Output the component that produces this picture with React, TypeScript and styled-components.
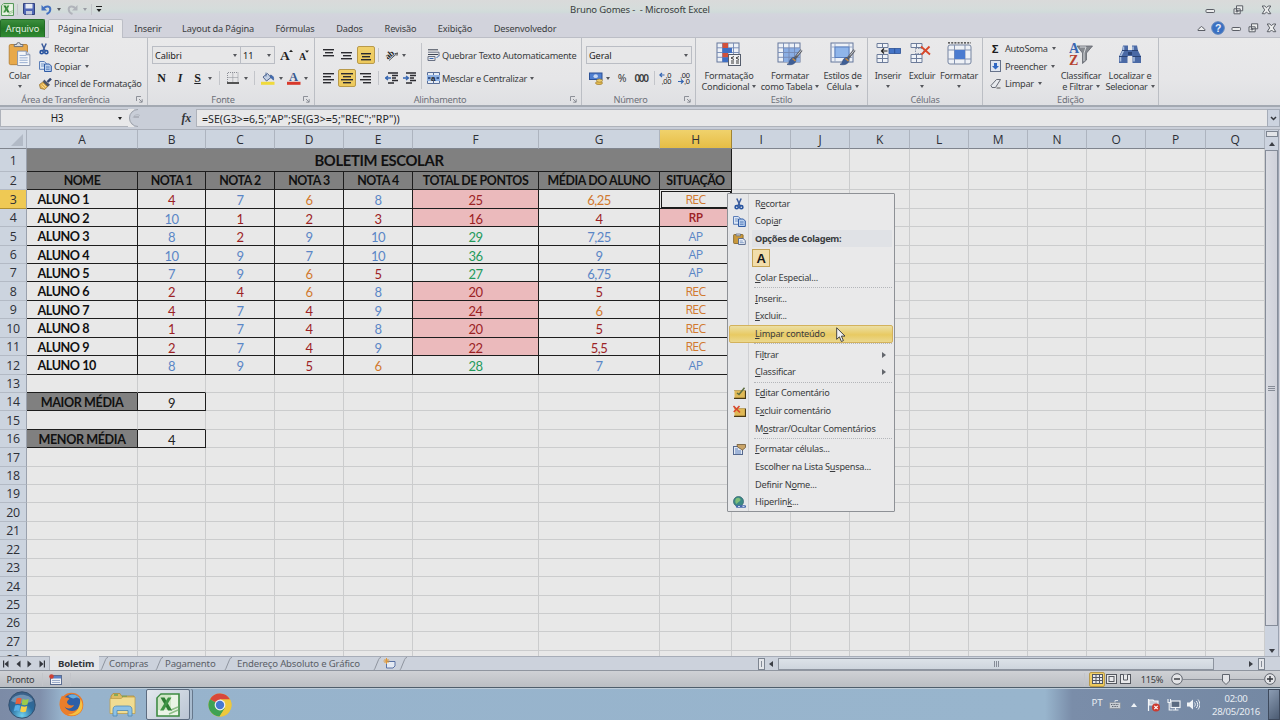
import React from "react";
import styled, { createGlobalStyle, css } from "styled-components";

const ui = `"Noto Sans", "Open Sans", sans-serif`;
const cellFont = `Lato, "Open Sans", sans-serif`;

const Global = createGlobalStyle`
  * { box-sizing: border-box; }
  html, body { margin: 0; padding: 0; overflow: hidden; }
  body { font-family: ${ui}; font-size: 9.2px; letter-spacing: -0.25px; color: #3a3c40; }
  svg { display: block; flex: none; }
`;

const Screen = styled.div`
  position: relative;
  width: 1280px;
  height: 720px;
  display: flex;
  flex-direction: column;
  overflow: hidden;
  background: #d2d3dc;
`;

/* ---------- title bar ---------- */
const TitleBar = styled.header`
  display: grid;
  grid-template-columns: 400px 480px 400px;
  align-items: center;
  height: 19px;
  background: linear-gradient(#dadada 0, #d6dcdb 8px, #d0dbda 12px, #d3d5dd 14px, #d2d3dc 100%);
`;
const QuickAccess = styled.div`
  display: flex;
  align-items: center;
  height: 19px;
  padding: 0 0 1px 1px;
`;
const Title = styled.div`
  text-align: center;
  font-size: 9.5px;
  line-height: 18px;
  letter-spacing: -0.15px;
  white-space: pre;
`;
const WindowButtons = styled.div<{ $w: number }>`
  display: grid;
  grid-auto-flow: column;
  grid-auto-columns: ${(p) => p.$w}px;
  justify-content: end;
  justify-items: center;
  align-items: center;
`;
const Slot = styled.span<{ $w: number }>`
  display: flex;
  flex: none;
  justify-content: center;
  align-items: center;
  width: ${(p) => p.$w}px;
`;
const Caret = styled.i<{ $c?: string }>`
  display: inline-block;
  flex: none;
  width: 0;
  height: 0;
  border: 2.5px solid transparent;
  border-top: 3px solid ${(p) => p.$c || "#55575c"};
  border-bottom: 0;
`;

/* ---------- ribbon tabs ---------- */
const TabRow = styled.nav`
  display: flex;
  height: 19px;
  border-bottom: 1px solid #bcbec6;
  background: #d2d3dc;
`;
const FileTab = styled.div`
  width: 45px;
  height: 18px;
  border-radius: 2px 2px 0 0;
  background: linear-gradient(#3c8e3d, #237626 50%, #308a32);
  border: 1px solid #236a26;
  border-bottom: 0;
  color: #e4f1e2;
  text-align: center;
  line-height: 18px;
  letter-spacing: 0;
`;
const RibbonTab = styled.div<{ $w: number; $active?: boolean }>`
  width: ${(p) => p.$w}px;
  height: 19px;
  line-height: 19px;
  text-align: center;
  letter-spacing: -0.15px;
  white-space: nowrap;
  ${(p) =>
    p.$active &&
    css`
      margin-left: 3px;
      border: 1px solid #bcbec6;
      border-bottom: 0;
      border-radius: 2px 2px 0 0;
      background: #e9e9eb;
      line-height: 18px;
    `}
`;
const TabTools = styled.div`
  margin-left: auto;
  display: flex;
  align-items: center;
`;

/* ---------- ribbon ---------- */
const Ribbon = styled.section`
  display: flex;
  height: 69px;
  background: linear-gradient(#e9e9ea, #e6e6e8 60%, #dfe0e3);
  border-bottom: 2px solid #a3a9b2;
`;
const Group = styled.div<{ $w: number }>`
  flex: none;
  position: relative;
  width: ${(p) => p.$w}px;
  height: 67px;
  display: flex;
  flex-direction: column;
  border-right: 1px solid #bbbec4;
`;
const GroupBody = styled.div`
  display: flex;
  height: 56px;
`;
const GroupLabel = styled.div<{ $r?: number }>`
  height: 11px;
  line-height: 11px;
  padding-right: ${(p) => p.$r || 0}px;
  text-align: center;
  color: #6d7079;
`;
const LauncherBox = styled.span`
  position: absolute;
  right: 4px;
  bottom: 2px;
`;
const Stack = styled.div<{ $w?: number; $pl?: number }>`
  display: flex;
  flex-direction: column;
  width: ${(p) => (p.$w ? p.$w + "px" : "auto")};
  padding-left: ${(p) => p.$pl || 0}px;
`;
const SmallStack = styled(Stack)`
  padding-top: 2px;
`;
const SmallButton = styled.div<{ $icon: number }>`
  display: grid;
  grid-template-columns: ${(p) => p.$icon}px auto auto;
  justify-content: start;
  align-items: center;
  height: 17.6px;
  white-space: nowrap;
  & > ${Caret} { margin-left: 4px; }
`;
const Sigma = styled.b`
  font-size: 11px;
  line-height: 12px;
  padding-left: 2px;
  color: #1c1c20;
`;
const BigButton = styled.div<{ $w: number }>`
  flex: none;
  width: ${(p) => p.$w}px;
  display: flex;
  flex-direction: column;
  align-items: center;
  padding-top: 4px;
  text-align: center;
  line-height: 10.6px;
  white-space: nowrap;
  & > svg { margin-bottom: 5px; }
  & ${Caret} { margin: 0 0 2px 3px; }
`;
const CaretLine = styled.span`
  height: 11px;
  display: flex;
  align-items: center;
  margin-left: -3px;
`;
const ToolRow = styled.div<{ $h: number }>`
  display: flex;
  align-items: center;
  height: ${(p) => p.$h}px;
  white-space: nowrap;
`;
const Combo = styled.div<{ $w: number }>`
  display: flex;
  justify-content: space-between;
  align-items: center;
  width: ${(p) => p.$w}px;
  height: 18px;
  padding: 0 3px 0 2px;
  border: 1px solid #babdc4;
  background: #e7e7e8;
  color: #222;
  letter-spacing: -0.1px;
  & + & { border-left: 0; }
`;
const Divider = styled.i<{ $h?: number }>`
  width: 1px;
  height: ${(p) => p.$h || 14}px;
  background: #c3c5ca;
`;
const Pressed = styled.span`
  display: flex;
  align-items: center;
  justify-content: center;
  width: 18px;
  height: 18px;
  border: 1px solid #b99a4a;
  border-radius: 2px;
  background: linear-gradient(#f0d06a, #edc95c);
`;
const ViewPressed = styled(Pressed)`
  width: 16px;
  height: 15px;
`;
const Glyph = styled.b<{ $italic?: boolean; $u?: boolean }>`
  font-family: "Liberation Serif", serif;
  font-size: 12px;
  font-style: ${(p) => (p.$italic ? "italic" : "normal")};
  text-decoration: ${(p) => (p.$u ? "underline" : "none")};
  line-height: 12px;
  color: #1c1c20;
`;
const Percent = styled.span`
  font-size: 10.5px;
  line-height: 12px;
`;
const Thousands = styled.span`
  font-size: 10px;
  line-height: 12px;
  font-weight: 600;
  letter-spacing: -1.4px;
`;

/* ---------- formula bar ---------- */
const FormulaBar = styled.section`
  display: flex;
  height: 23px;
  padding: 2px 0;
  background: #c9ced8;
  border-bottom: 1px solid #a9aeb8;
`;
const NameBox = styled.div`
  display: grid;
  grid-template-columns: 112px 14px;
  align-items: center;
  justify-items: center;
  width: 128px;
  height: 18px;
  background: #e8e8e9;
  border: 1px solid #aeb2ba;
  border-right: 0;
  color: #222;
  font-size: 10px;
`;
const FxArea = styled.div`
  display: flex;
  align-items: center;
  justify-content: space-between;
  width: 68px;
  height: 18px;
  padding: 0 5px 0 1px;
  background: linear-gradient(90deg, #e8e8e9 6px, transparent 6px);
  & > svg { margin-top: -1px; }
`;
const FxLabel = styled.span`
  font: italic bold 12px "Liberation Serif", serif;
  color: #33353a;
`;
const FormulaInput = styled.div`
  flex: 1;
  height: 18px;
  line-height: 18px;
  padding-left: 5px;
  border: 1px solid #aeb2ba;
  border-right: 0;
  background: #e8e8e9;
  color: #26272a;
  font-size: 10.6px;
  letter-spacing: 0.02px;
`;
const ExpandButton = styled.div`
  display: flex;
  align-items: center;
  justify-content: center;
  width: 13px;
  height: 18px;
  border: 1px solid #a5acb8;
  background: #ccd3df;
`;

/* ---------- sheet ---------- */
const COLS = [111, 68, 69, 69, 69, 126, 121, 72, 59, 59, 60, 59, 59, 59, 59, 60, 59];
const LETTERS = "ABCDEFGHIJKLMNOPQ".split("");
const columns = `27px ${COLS.map((c) => c + "px").join(" ")}`;
const rowBottom = (n: number) => (n === 1 ? 172 : Math.round(190.3 + (n - 2) * 18.42));
const rowHeights = Array.from({ length: 28 }, (_, i) =>
  i === 0 ? 23 : rowBottom(i + 1) - rowBottom(i)
);

const Work = styled.main`
  display: flex;
  height: 527px;
  overflow: hidden;
`;
const Sheet = styled.div`
  flex: none;
  width: 1265px;
  height: 527px;
  overflow: hidden;
  display: grid;
  grid-template-columns: ${columns};
  grid-template-rows: 19px ${rowHeights.map((h) => h + "px").join(" ")};
  background: #e8e8e8;
`;
const Corner = styled.div`
  display: flex;
  align-items: flex-end;
  justify-content: flex-end;
  padding: 0 3px 2px 0;
  background: #cdd5e0;
  border-right: 1px solid #a9b0bc;
  border-bottom: 1px solid #80858e;
`;
const ColHead = styled.div<{ $sel?: boolean }>`
  background: ${(p) => (p.$sel ? "linear-gradient(#f0d26c, #e6bd45)" : "#ccd4df")};
  border-right: 1px solid ${(p) => (p.$sel ? "#a08434" : "#adb4bf")};
  border-bottom: 1px solid #80858e;
  text-align: center;
  line-height: 20px;
  font-family: "Open Sans", sans-serif;
  font-size: 12px;
  letter-spacing: -0.2px;
  color: #2c2f36;
`;
const RowHead = styled.div<{ $sel?: boolean }>`
  display: flex;
  align-items: center;
  justify-content: center;
  padding-top: 1px;
  background: ${(p) => (p.$sel ? "#efc954" : "#ccd4df")};
  border-right: 1px solid #9aa1ad;
  border-bottom: 1px solid ${(p) => (p.$sel ? "#b08f30" : "#b3bac5")};
  font-family: "Open Sans", sans-serif;
  font-size: 12.4px;
  letter-spacing: -0.4px;
  line-height: 14px;
  color: #2c2f36;
`;
type CellProps = {
  $fill?: string;
  $ink?: string;
  $bold?: boolean;
  $line?: string;
  $edge?: string;
  $left?: boolean;
  $span?: number;
  $size?: number;
  $ls?: number;
  $pt?: number;
};
const Cell = styled.div<CellProps>`
  display: flex;
  align-items: center;
  justify-content: ${(p) => (p.$left ? "flex-start" : "center")};
  padding-top: ${(p) => p.$pt ?? 2}px;
  padding-left: ${(p) => (p.$left ? 10.5 : 0)}px;
  grid-column: span ${(p) => p.$span || 1};
  background: ${(p) => p.$fill || "transparent"};
  color: ${(p) => p.$ink || "#111"};
  font-family: ${cellFont};
  font-size: ${(p) => p.$size || 13}px;
  font-weight: ${(p) => (p.$bold ? 700 : 400)};
  letter-spacing: ${(p) => p.$ls ?? -0.5}px;
  line-height: 14px;
  white-space: nowrap;
  border-right: 1px solid ${(p) => p.$edge || p.$line || "#cbcccd"};
  border-bottom: 1px solid ${(p) => p.$line || "#cbcccd"};
`;
const ResultCell = styled(Cell)`
  font-family: "Open Sans", sans-serif;
  font-size: 12.3px;
  font-weight: ${(p) => (p.$bold ? 600 : 400)};
  letter-spacing: -0.7px;
  padding-top: 1px;
`;
const ActiveCell = styled(ResultCell)`
  outline: 1px solid #1b1b1b;
  outline-offset: -2px;
`;

/* ---------- scroll bars ---------- */
const Arrow = styled.i<{ $dir: "up" | "down" | "left" | "right"; $c?: string }>`
  width: 0;
  height: 0;
  border: 3.5px solid transparent;
  ${(p) => p.$dir === "up" && `border-bottom: 4px solid ${p.$c || "#3b3e45"}; border-top: 0;`}
  ${(p) => p.$dir === "down" && "border-top: 4px solid #3b3e45; border-bottom: 0;"}
  ${(p) => p.$dir === "left" && "border-right: 4px solid #3b3e45; border-left: 0;"}
  ${(p) => p.$dir === "right" && "border-left: 4px solid #3b3e45; border-right: 0;"}
`;
const VScroll = styled.div`
  display: flex;
  flex-direction: column;
  align-items: center;
  width: 13px;
  padding-top: 1px;
  background: #ccd3df;
  box-shadow: 1px 0 0 #9ba3b1;
`;
const VSplit = styled.div`
  width: 12px;
  height: 6px;
  margin-bottom: 5px;
  border: 1px solid #7d8591;
  background: #e2e4e8;
`;
const VThumb = styled.div`
  display: flex;
  flex-direction: column;
  justify-content: center;
  align-items: center;
  gap: 1px;
  width: 13px;
  height: 476px;
  margin: 4px 0 23px;
  border: 1px solid #858c99;
  background: linear-gradient(90deg, #d9dbe2, #cfd1da);
`;
const Grip = styled.i<{ $v?: boolean }>`
  width: ${(p) => (p.$v ? 1 : 7)}px;
  height: ${(p) => (p.$v ? 6 : 1)}px;
  background: #868c97;
`;

const SheetTabs = styled.div`
  display: flex;
  align-items: center;
  height: 15px;
  border-top: 1px solid #a7adb8;
  border-bottom: 1px solid #8f959f;
  background: #ccd2dc;
  font-size: 9.6px;
`;
const NavArrows = styled.div`
  display: flex;
  width: 50px;
  height: 13px;
  border-right: 1px solid #a7adb8;
  align-items: center;
`;
const SheetTab = styled.div<{ $w: number; $active?: boolean; $pl?: number }>`
  width: ${(p) => p.$w}px;
  height: 14px;
  margin-top: ${(p) => (p.$active ? -1 : 0)}px;
  line-height: ${(p) => (p.$active ? 16 : 14)}px;
  padding-left: ${(p) => p.$pl || 1}px;
  background: ${(p) => (p.$active ? "#e6e7ea" : "transparent")};
  font-weight: ${(p) => (p.$active ? 700 : 400)};
  letter-spacing: -0.17px;
  color: ${(p) => (p.$active ? "#33363c" : "#5b5f67")};
  white-space: nowrap;
`;
const HScroll = styled.div`
  display: flex;
  align-items: center;
  width: 522px;
  margin-left: auto;
`;
const HSplit = styled.div`
  display: flex;
  justify-content: center;
  align-items: center;
  width: 7px;
  height: 12px;
  border: 1px solid #7d8591;
  background: #e4e6ea;
`;
const HThumb = styled.div`
  display: flex;
  align-items: center;
  justify-content: center;
  gap: 1px;
  width: 436px;
  height: 12px;
  margin: 0 35px 0 1px;
  border: 1px solid #8d949f;
  background: linear-gradient(#dce2e8, #ced5dd);
`;

/* ---------- status bar ---------- */
const StatusBar = styled.footer`
  display: flex;
  align-items: center;
  height: 17px;
  padding: 0 4px 0 6px;
  background: linear-gradient(#cfd1d5, #bbbec3);
  border-bottom: 1px solid #4f5e6b;
`;
const ZoomTrack = styled.div`
  display: flex;
  align-items: center;
  width: 81px;
  height: 11px;
  padding-left: 39px;
  background: linear-gradient(#8a8e96, #8a8e96) 0 5px / 100% 1px no-repeat;
`;
const Right = styled.div`
  display: flex;
  align-items: center;
  margin-left: auto;
`;

/* ---------- task bar ---------- */
const TaskBar = styled.footer`
  display: flex;
  height: 32px;
  background: linear-gradient(
    90deg,
    #7c8ba6 0,
    #7f8fab 40px,
    #97b3cc 62px,
    #98b5cd 1045px,
    #7a8da9 1072px,
    #7488a3 100%
  );
  border-top: 1px solid #bccbd8;
`;
const TaskSlot = styled.div<{ $w: number; $active?: boolean }>`
  display: flex;
  align-items: center;
  justify-content: center;
  width: ${(p) => p.$w}px;
  height: 31px;
  ${(p) =>
    p.$active &&
    css`
      border: 1px solid #5d6c80;
      border-radius: 2px;
      background: linear-gradient(135deg, #e3e8ee, #bac5d4);
      box-shadow: 2px 0 0 #a9bccf, 3px 0 0 #66788c;
      margin-right: 4px;
    `}
`;
const Tray = styled.div`
  display: flex;
  align-items: center;
  margin-left: auto;
  color: #e8edf3;
`;
const Lang = styled.span`
  width: 12px;
  margin-bottom: 5px;
  text-align: center;
  font-size: 9.8px;
`;
const Clock = styled.div`
  width: 64px;
  text-align: center;
  font-size: 9.5px;
  line-height: 13px;
  letter-spacing: -0.25px;
`;
const ShowDesktop = styled.div`
  width: 12px;
  height: 31px;
  border: 1px solid #3e4a5d;
  background: linear-gradient(135deg, #8b9cb3, #4c5c73);
`;

/* ---------- context menu ---------- */
const Menu = styled.div`
  position: absolute;
  left: 727px;
  top: 193px;
  width: 168px;
  height: 319px;
  padding: 1px;
  border: 1px solid #8e9196;
  border-radius: 1px;
  background: linear-gradient(90deg, #e6e7e9 0 20px, #cfd0d3 20px 21px, #e9e9ea 21px);
`;
const MenuItem = styled.div<{ $hot?: boolean; $head?: boolean }>`
  display: grid;
  grid-template-columns: 18px auto 1fr;
  column-gap: 7px;
  align-items: center;
  height: ${(p) => (p.$head ? 17 : 17.6)}px;
  line-height: 12px;
  white-space: nowrap;
  border: 1px solid transparent;
  border-radius: 2px;
  & > svg:first-child { justify-self: center; }
  & > ${Arrow} { justify-self: end; margin-right: 6px; border-width: 3px; border-left-width: 4px; border-left-color: #63666c; }
  ${(p) => p.$hot && "border-color: #d3b25c; background: linear-gradient(#ecdfa4, #e8ca62 55%, #ebd88e);"}
  ${(p) => p.$head && "font-weight: 700; letter-spacing: -0.35px; background: linear-gradient(90deg, transparent 22px, #e0e2e6 22px);"}
`;
const MenuRule = styled.hr`
  height: 0;
  margin: 0.8px 1px 1.6px 25px;
  border: 0;
  border-top: 1px dotted #b4b6ba;
`;
const PasteOption = styled.div`
  display: flex;
  justify-content: center;
  align-items: center;
  width: 18px;
  height: 18px;
  margin: 2px 0 1.600px 23px;
  border: 1px solid #c4a356;
  background: #f2ddaa;
  font: bold 13px "Liberation Sans", sans-serif;
  color: #15151a;
`;
const Pointer = styled.svg`
  position: absolute;
  left: 836px;
  top: 327px;
`;

/* ---------- drawings ---------- */
const Lines = ({ rows, w = 12, h = 12 }: { rows: [number, number, number][]; w?: number; h?: number }) => (
  <svg width={w} height={h}>
    {rows.map(([x, y, len], i) => (
      <rect key={i} x={x} y={y} width={len} height="1.4" fill="#2b2b30" />
    ))}
  </svg>
);
const Scissors = () => (
  <svg width="10" height="12" viewBox="0 0 10 12">
    <path d="M2.800.5 6.200 8M7.200.5 3.800 8" stroke="#3c5c9c" strokeWidth="1.500" fill="none" />
    <circle cx="2.700" cy="9.200" r="1.600" fill="none" stroke="#2854a0" strokeWidth="1.600" />
    <circle cx="7.300" cy="9.200" r="1.600" fill="none" stroke="#2854a0" strokeWidth="1.600" />
  </svg>
);
const Copy = () => (
  <svg width="13" height="11" viewBox="0 0 13 11">
    <path d="M.5.5h4.800l2 2v5.800H.5z" fill="#dbe6f5" stroke="#5c7fb8" />
    <path d="M2 3h3M2 5h3" stroke="#7595c6" />
    <path d="M5.500 3h4.800l2 2v5.500H5.500z" fill="#b9cfee" stroke="#2f5ba4" />
    <path d="M7 6h3.600M7 8.200h3.600" stroke="#4f78b8" />
  </svg>
);
const Brush = () => (
  <svg width="13" height="12" viewBox="0 0 13 12">
    <path d="M12 .6 8.500 4" stroke="#33456e" strokeWidth="2.400" />
    <path d="M5.200 1.600 11 6.800 8.500 9 3.600 4.200z" fill="#4d5568" />
    <path d="M3.800 4 .4 6.600 1.400 10.400l4.400 1L8.600 8.600z" fill="#e6b552" stroke="#8f6b2a" strokeWidth=".7" />
    <path d="M2.500 7.500l3 3M4 6l3 3" stroke="#fae3a8" strokeWidth=".8" />
  </svg>
);
const Clipboard = ({ s = 1 }: { s?: number }) => (
  <svg width={23 * s} height={24 * s} viewBox="0 0 23 25">
    <rect x=".8" y="2.600" width="19" height="21" rx="1.500" fill="#e8a94a" stroke="#b98439" />
    <path d="M6 4.800V2.600h2.500a2 2 0 0 1 4 0H15v2.200z" fill="#d7dbe0" stroke="#666d78" />
    <path d="M9.500 9.500h9l3.800 3.800v11.200H9.500z" fill="#f4f6f9" stroke="#8592ab" />
    <path d="M11.500 14h7M11.500 16.500h8.500M11.500 19h8.500M11.500 21.500h8.500" stroke="#8ba4cb" strokeWidth=".9" />
    <path d="M18.500 9.500v3.800h3.800" fill="#c9d3e4" stroke="#8592ab" />
  </svg>
);
const PasteSmall = () => (
  <svg width="13" height="12" viewBox="0 0 13 12">
    <rect x=".6" y="1.500" width="9.500" height="9" rx=".8" fill="#c9993c" stroke="#7d5e22" strokeWidth=".8" />
    <path d="M3 2.800V1h4.500v1.800z" fill="#d9dce0" stroke="#5f6674" strokeWidth=".7" />
    <path d="M5.500 5.500h4.500l2.300 2v4H5.500z" fill="#e8edf5" stroke="#56688c" strokeWidth=".9" />
    <path d="M6.800 8h3M6.800 9.700h4" stroke="#6d8bbd" strokeWidth=".8" />
  </svg>
);
const Launcher = () => (
  <LauncherBox>
    <svg width="7" height="7" viewBox="0 0 7 7" fill="none" stroke="#83878f" strokeWidth=".9">
      <path d="M.5 5V.5H5M3 3l3 3M6.200 3.200v3H3.200" />
    </svg>
  </LauncherBox>
);
const FontStep = ({ grow }: { grow?: boolean }) => (
  <svg width={grow ? 13 : 10} height="14" viewBox={grow ? "0 0 13 14" : "0 0 10 14"}>
    <text x="0" y={grow ? 12 : 12} fontFamily="Liberation Serif" fontWeight="700" fontSize={grow ? 13.5 : 10} fill="#222">A</text>
    {grow ? <path d="M9 4l2-2.200L13 4z" fill="#222" /> : <path d="M6 2.500h4L8 4.700z" fill="#222" />}
  </svg>
);
const GridIcon = ({ kind }: { kind: "cond" | "table" | "style" }) => (
  <svg width="26" height="24" viewBox="0 0 26 24">
    <rect x="1" y="1" width="22" height="19" fill="#edf1f7" stroke="#65779b" />
    {kind === "table" && <rect x="6" y="6" width="17" height="14" fill="#8aaee4" />}
    {kind !== "style" && (
      <path d="M6.500 1v19M12 1v19M17.500 1v19M1 5.800h22M1 10.500h22M1 15.300h22" stroke="#7489b3" strokeWidth=".9" fill="none" />
    )}
    {kind === "cond" && (
      <g>
        <rect x="6.500" y="1" width="5.500" height="5" fill="#d2513c" />
        <rect x="6.500" y="6" width="9.500" height="5" fill="#3f6fc4" />
        <rect x="6.500" y="11" width="5.500" height="4.500" fill="#d2513c" />
        <rect x="6.500" y="15.300" width="5.500" height="4.700" fill="#3f6fc4" />
        <rect x="12.500" y="12.500" width="12" height="11" fill="#f1f2f4" stroke="#555d6c" />
        <path d="M18 14.500l-3 1.500 3 1.500M15 19h3M15 21h3M23 14.500l-3 1.500 3 1.500M20 19h3M20 21h3" stroke="#222" strokeWidth=".9" fill="none" />
      </g>
    )}
    {kind === "style" && (
      <g>
        <path d="M5 1v19M19 1v19M1 5h22M1 15.500h22" stroke="#9cabc8" fill="none" />
        <rect x="5" y="5" width="14" height="10.500" fill="#8fb5ea" stroke="#5b80c0" />
      </g>
    )}
    {kind !== "cond" && (
      <g>
        <path d="M24.500 8 17 17.500" stroke="#5d5f66" strokeWidth="2.800" />
        <path d="M24.500 8 20 13.500" stroke="#c9cdd4" strokeWidth="1" />
        <path d="M17 15.500c-3 0-4 2-5 5-.6 1-1.500 1.500-2 2 5 .9 9-.5 9-5z" fill="#3f5f96" stroke="#2d4675" strokeWidth=".5" />
        <path d="M15.500 16.500l3 2.400" stroke="#c98a3d" strokeWidth="1.600" />
      </g>
    )}
  </svg>
);
const CellsIcon = ({ kind }: { kind: "in" | "out" | "fmt" }) => (
  <svg width="25" height="24" viewBox="0 0 25 24">
    {kind !== "fmt" ? (
      <g>
        <path d="M1 1.500h11v4H1zM6.500 1.500v4M1 12.500h11v8H1zM6.500 12.500v8M1 16.500h11" fill="#eff2f7" stroke="#6d7c9a" />
        {kind === "in" ? (
          <g>
            <rect x="13" y="6.500" width="11.500" height="5" fill="#4474c6" stroke="#2c5196" strokeWidth=".8" />
            <path d="M18.700 6.500v5" stroke="#2c5196" />
            <path d="M5.500 9h6M8 6.500 5.500 9 8 11.500" stroke="#222" strokeWidth="1.200" fill="none" />
          </g>
        ) : (
          <g>
            <rect x="5.500" y="6.500" width="8" height="5" fill="none" stroke="#8b95ab" strokeDasharray="1.500 1" />
            <path d="M11 4.500l9 8M19.500 4.500l-8 8" stroke="#d8492c" strokeWidth="1.800" />
          </g>
        )}
      </g>
    ) : (
      <g>
        <path d="M1 .8h23" stroke="#333" strokeWidth="1.300" strokeDasharray="2 1.200" />
        <rect x="1" y="3" width="23" height="19" rx="2" fill="#eef1f6" stroke="#74839f" />
        <path d="M7.500 3v19M18 3v19M1 8h23M1 17h23" stroke="#8493b1" fill="none" />
        <rect x="7.500" y="8" width="10.500" height="9" fill="#4a7bd0" />
      </g>
    )}
  </svg>
);
const SortFilter = () => (
  <svg width="24" height="24" viewBox="0 0 24 24">
    <path d="M8 4h15.500l-6 7v7l-4 3.500V11z" fill="#85898f" stroke="#62666e" strokeWidth=".8" />
    <path d="M11 5h6l-2 6v8" stroke="#d5d8dc" fill="none" />
    <text x="0" y="11" fontFamily="Liberation Serif" fontWeight="700" fontSize="14" fill="#3b67b1">A</text>
    <text x="0" y="23" fontFamily="Liberation Serif" fontWeight="700" fontSize="14" fill="#b5412f">Z</text>
  </svg>
);
const Binoculars = () => (
  <svg width="24" height="24" viewBox="0 0 24 24">
    <path d="M5 3.500h5V8h4V3.500h5l1 5 3 6v6.500h-8.500V14h-5v7H1v-6.500l3-6z" fill="#4a69a5" />
    <path d="M5.500 4.500v4l-3 6v5M15 4.500v4M16 14.500v5" stroke="#a9bede" strokeWidth="1.600" fill="none" />
    <path d="M4 8.500h6M14 8.500h6M1 14.500h8.500M14.500 14.500H23" stroke="#2b4374" />
    <path d="M10 10h4v3h-4z" fill="#2b4374" />
  </svg>
);
const Wrap = () => (
  <svg width="13" height="12" viewBox="0 0 13 12" fill="none">
    <path d="M1 .8h10M1 5.500h10" stroke="#3d4452" />
    <path d="M1 3.200h11v4M1 7.500h7v4H1z" stroke="#6a7284" />
    <path d="M2.500 9.500h4" stroke="#3566b2" />
    <path d="M12 6.500 9.500 9" stroke="#3566b2" />
  </svg>
);
const Merge = () => (
  <svg width="13" height="12" viewBox="0 0 13 12">
    <path d="M.5.5h12v11H.5zM6.500.5v3M6.500 8.500v3" fill="#e6ecf5" stroke="#5a6f98" />
    <rect x="0" y="3" width="13" height="6" fill="#8db0e2" />
    <path d="M1 6h2.500M12 6H9.500" stroke="#1d3a70" strokeWidth="1.400" />
    <text x="4" y="8.500" fontFamily="Liberation Sans" fontWeight="700" fontSize="8" fill="#222">a</text>
  </svg>
);
const Indent = ({ out }: { out?: boolean }) => (
  <svg width="13" height="12" viewBox="0 0 13 12" fill="none">
    <path d="M3 1h10M7 3.500h6M7 6h4M7 8.500h6M3 11h6" stroke="#2b2b30" strokeWidth="1.300" />
    <path d={out ? "M0 6h5M3 4l2.500 2L3 8" : "M6 6H1M3 4 .5 6 3 8"} stroke="#3566b2" strokeWidth="1.300" />
  </svg>
);
const Orientation = () => (
  <svg width="14" height="12" viewBox="0 0 14 12">
    <text x="0" y="9" fontFamily="Liberation Serif" fontWeight="700" fontSize="9" fill="#222" transform="rotate(-38 4 6)">ab</text>
    <path d="M4 11.500 12.500 4M12.500 4l-3 .8M12.500 4l-.6 2.800" stroke="#555" fill="none" />
  </svg>
);
const Borders = () => (
  <svg width="12" height="12" viewBox="0 0 12 12" fill="none">
    <path d="M.5 10V.5h10.500V10M5.800.5V10M.5 5.500h10.500" stroke="#8b8e96" strokeDasharray="1 1" />
    <path d="M0 11h12" stroke="#222" strokeWidth="1.500" />
  </svg>
);
const Fill = () => (
  <svg width="14" height="13" viewBox="0 0 14 13">
    <path d="M2 5l4.500-3.500L10 5.500 5.500 9z" fill="#c3d0e4" stroke="#51658f" />
    <path d="M5 .5v4M9.500 3c2.500.5 3.500 2.500 3 5-1.500-1-2-2-3-2.500z" fill="#3f6cb8" stroke="#3f5f96" strokeWidth=".8" />
    <rect y="9.800" width="13.500" height="3" fill="#f0da3c" />
  </svg>
);
const FontColor = () => (
  <svg width="14" height="13" viewBox="0 0 14 13">
    <text x="2" y="9" fontFamily="Liberation Serif" fontWeight="700" fontSize="12.500" fill="#39598f">A</text>
    <rect y="9.800" width="13.500" height="3" fill="#d8382b" />
  </svg>
);
const Currency = () => (
  <svg width="14" height="13" viewBox="0 0 14 13">
    <rect x=".5" y="1" width="12.500" height="6.500" fill="#4f7fd0" stroke="#2c5196" />
    <ellipse cx="6.700" cy="4.200" rx="2.200" ry="1.900" fill="#c6d6f0" />
    <ellipse cx="10" cy="11" rx="3.500" ry="1.600" fill="#e6bc4e" stroke="#9a7830" strokeWidth=".7" />
    <ellipse cx="10.500" cy="8.600" rx="3" ry="1.600" fill="#edcf70" stroke="#9a7830" strokeWidth=".7" />
  </svg>
);
const Decimal = ({ more }: { more?: boolean }) => (
  <svg width="14" height="13" viewBox="0 0 14 13">
    <text x={more ? 6.5 : 3} y="5.800" fontFamily="Liberation Sans" fontSize="7.500" fill="#222">{more ? ",0" : ",00"}</text>
    <text x={more ? 2.5 : 7} y="12.300" fontFamily="Liberation Sans" fontSize="7.500" fill="#222">{more ? ",00" : ",0"}</text>
    <path d={more ? "M5.500 3H1M3 1 .8 3 3 5" : "M1 9.500h5M4 7.500l2.200 2-2.200 2"} stroke="#3566b2" strokeWidth="1.200" fill="none" />
  </svg>
);
const FillDown = () => (
  <svg width="11" height="12" viewBox="0 0 11 12">
    <rect x=".5" y=".5" width="10" height="11" fill="#dfe6f1" stroke="#66728a" />
    <path d="M4 3h3v3h2L5.500 9.500 2 6h2z" fill="#2f68c4" />
  </svg>
);
const Eraser = () => (
  <svg width="12" height="11" viewBox="0 0 12 11">
    <path d="M1 7.500 6.500 1.500h4L5.500 9.500H2z" fill="#e8eaee" stroke="#666b75" />
    <path d="M6.500 10h4" stroke="#555" />
  </svg>
);
const ExcelMark = ({ s }: { s: number }) => (
  <svg width={s} height={s} viewBox="0 0 24 24">
    <path d="M5 1h18v22H1V5z" fill="#eaf4e6" stroke="#3c8a41" strokeWidth="1.600" />
    <path d="M15 17l7-3M13 21l9-4" stroke="#8fbf8a" strokeWidth="1.500" />
    <path d="M5 2h10v15H2V5z" fill="#cfe6c6" />
    <path d="M4.500 4.500h4l7.500 13h-4z" fill="#2d7d34" />
    <path d="M15.500 4.500h-3.500l-8 13h3.700z" fill="#3f9445" />
  </svg>
);
const Save = () => (
  <svg width="12" height="12" viewBox="0 0 12 12">
    <path d="M.5.5h11v11H1.500l-1-1z" fill="#5067b5" stroke="#33437f" />
    <rect x="2.500" y=".8" width="7" height="4.700" fill="#e6eaf3" />
    <rect x="3" y="8" width="6" height="3.500" fill="#c4cbdc" />
  </svg>
);
const Undo = ({ c, flip }: { c: string; flip?: boolean }) => (
  <svg width="11" height="11" viewBox="0 0 11 11">
    <g transform={flip ? "matrix(-1 0 0 1 11 0)" : undefined}>
      <path d="M2.500 4.500C5 1.500 9.500 2 9.300 5.500 9.200 8 7 9.500 5.500 10" stroke={c} strokeWidth="2" fill="none" />
      <path d="M.5 1v5.500h5.500z" fill={c} />
    </g>
  </svg>
);
const WinGlyph = ({ kind }: { kind: "min" | "max" | "close" | "up" }) => (
  <svg width="11" height="10" viewBox="0 0 11 10" fill="#eceded" stroke="#5b5e66">
    {kind === "min" && <rect x="1" y="4.500" width="8.500" height="3" rx=".8" />}
    {kind === "max" && <path d="M3.500.8h6.200v5H3.500zM1 3.800h6.200v5H1zM3 5.800h2v1H3z" />}
    {kind === "close" && <path d="M1.200 1h2.600l1.700 1.700L7.200 1h2.600L7.300 4.900 9.800 8.700H7.200L5.500 7 3.800 8.700H1.200l2.500-3.800z" />}
    {kind === "up" && <path d="M2 7.500c0-2 1.700-2.300 3.500-4 1.800 1.700 3.500 2 3.500 4z" />}
  </svg>
);
const Help = () => (
  <svg width="14" height="14" viewBox="0 0 14 14">
    <circle cx="7" cy="7" r="6.300" fill="#3a70c2" stroke="#5f86bd" />
    <text x="3.900" y="10.800" fontFamily="Liberation Sans" fontWeight="700" fontSize="10.500" fill="#e6edf7">?</text>
  </svg>
);
const Slash = () => (
  <svg width="9" height="14" viewBox="0 0 9 14">
    <path d="M.5 13.500c2 0 2.200-1.500 3-3.500L6 4C7 1.500 7.500.5 9 .5" fill="none" stroke="#8f959f" />
  </svg>
);
const NavArrow = ({ end, flip }: { end?: boolean; flip?: boolean }) => (
  <svg width="12" height="8" viewBox="0 0 12 8">
    <g transform={flip ? "matrix(-1 0 0 1 12 0)" : undefined} fill="#33363d">
      <path d="M8.500.5v7L4.500 4z" />
      {end && <path d="M3 .5h1.200v7H3z" />}
    </g>
  </svg>
);
const NewSheet = () => (
  <svg width="14" height="11" viewBox="0 0 14 11">
    <path d="M3.500 3.500h8.500V8l-2 2H3.500z" fill="#e4eaf3" stroke="#5a73a5" />
    <path d="M3.500 0v6M.5 3h6M1.500 1l4 4M5.500 1l-4 4" stroke="#e09a3a" />
  </svg>
);
const MacroIcon = () => (
  <svg width="13" height="11" viewBox="0 0 13 11">
    <rect x="1.500" y="1.500" width="11" height="9" fill="#eef1f6" stroke="#5c6d90" />
    <rect x="2" y="2" width="10" height="2.500" fill="#5b82c6" />
    <path d="M3 6.500h8M3 8.500h8" stroke="#9cacca" />
    <circle cx="2.500" cy="2.500" r="2.300" fill="#cf3f33" />
  </svg>
);
const ViewIcon = ({ kind }: { kind: number }) => (
  <svg width="11" height="10" viewBox="0 0 11 10" fill="#e9eaec" stroke="#545860">
    <rect x=".5" y=".5" width="10" height="9" />
    {kind === 0 && <path d="M.5 3.500h10M.5 6.500h10M4 .5v9M7.500.5v9" />}
    {kind === 1 && <rect x="3" y="2.500" width="5" height="5" />}
    {kind === 2 && <path d="M3.500.5V6h4V.5" />}
  </svg>
);
const RoundButton = ({ plus }: { plus?: boolean }) => (
  <svg width="12" height="12" viewBox="0 0 12 12">
    <circle cx="6" cy="6" r="5.300" fill="#e3e4e7" stroke="#5f646d" />
    <path d={plus ? "M3 6h6M6 3v6" : "M3 6h6"} stroke="#33363c" strokeWidth="1.400" />
  </svg>
);
const Start = () => (
  <svg width="28" height="28" viewBox="0 0 28 28">
    <defs>
      <radialGradient id="orb" cx=".5" cy=".9" r=".9">
        <stop offset="0" stopColor="#6fd0ee" />
        <stop offset=".5" stopColor="#2a6b9d" />
        <stop offset="1" stopColor="#3c5f86" />
      </radialGradient>
    </defs>
    <circle cx="14" cy="14" r="13.200" fill="url(#orb)" stroke="#34506f" />
    <path d="M3 10C6 1.500 22 1.500 25 10c-6 3-16 3-22 0z" fill="#b5cadd" opacity=".45" />
    <path d="M8.500 7.500c2-1 3.800-.8 5.200 0l-1.200 5.800c-1.700-.8-3.400-.8-5.200 0z" fill="#e8603a" />
    <path d="M14.700 8c1.800.9 3.700.9 6 0l-1.200 5.600c-2 .9-4 .9-6 0z" fill="#9bcb4b" />
    <path d="M7 14.500c1.800-.8 3.500-.8 5.300 0l-1.200 5.600c-1.700-.8-3.400-.8-5.200 0z" fill="#58b0e8" />
    <path d="M13.300 15c1.900.9 4 .9 5.900 0L18 20.600c-2 .9-4 .9-5.900 0z" fill="#f8cf46" />
  </svg>
);
const Firefox = () => (
  <svg width="25" height="25" viewBox="0 0 25 25">
    <circle cx="12.500" cy="12.500" r="11.800" fill="#e8792a" />
    <circle cx="13" cy="10.500" r="8.600" fill="#2c5fa8" />
    <path d="M9 4c4-3 10-1.500 12 3-2-1.500-4-2-5-1-2 1-4 0-7-2z" fill="#6aaede" />
    <path d="M1 8c1-2 1.500-3 2-4.500 1 1.500 2 2 4 2 1.500 0 2.500.5 3.500 1.500-1.500 1-2.500 2-2.500 3.500 1 2.500 4 3.500 7 2.500-1.500 4-7 4.500-9.500 1.500 2 5.500 10 7 14 2 2.500-3 2.500-7 1.500-10 3.500 4 4 10 .5 14C15 27 3 24.500 1 15c-.5-3-.5-5 0-7z" fill="#ea7e2b" />
    <path d="M21.500 7c3 4.500 2.500 11-1.500 14-3 2.500-8 3-11 1.500 7 0 12-5 12.500-15.500z" fill="#f5c242" />
  </svg>
);
const Folder = () => (
  <svg width="27" height="25" viewBox="0 0 27 25">
    <path d="M2 4 4 1.500h7L12.500 4H25v16H2z" fill="#dcbc62" stroke="#ad8d3c" strokeWidth=".8" />
    <path d="M5 3h4M13 4.500h5M19 6h4" stroke="#6aa257" strokeWidth="1.500" />
    <path d="M1 6.500h11l2-1.500h12v16.500H1z" fill="#f0dc92" stroke="#bf9f4c" strokeWidth=".8" />
    <path d="M4 24v-6.500c0-3 2-3.500 4-3.500h11c2.500 0 4 1 4 3.500V24h-4v-5.500H8V24z" fill="#8cc1e6" stroke="#4e88b4" strokeWidth=".8" />
  </svg>
);
const Chrome = () => (
  <svg width="24" height="24" viewBox="0 0 24 24">
    <circle cx="12" cy="12" r="11.500" fill="#e9c53a" />
    <path d="M12 12 2 6.200A11.500 11.500 0 0 1 22 6.500H12z" fill="#d8483a" />
    <path d="M12 12 2 6.200A11.500 11.500 0 0 0 11.500 23.500L17 15z" fill="#3fa254" />
    <path d="M12 6.500h10A11.500 11.500 0 0 1 11.500 23.500L17 15z" fill="#edc83d" />
    <circle cx="12" cy="12" r="5.400" fill="#eef2f6" />
    <circle cx="12" cy="12" r="4.200" fill="#4678d0" />
  </svg>
);
const Keyboard = () => (
  <svg width="12" height="9" viewBox="0 0 12 9">
    <rect x=".5" y="2.500" width="11" height="6" rx="1" fill="#c9ced4" stroke="#8d96a1" />
    <path d="M2 4.500h8M3 6.500h6" stroke="#5a6370" strokeDasharray="1 .6" />
    <path d="M6 2.500V.5h3" stroke="#d6dbe1" fill="none" />
  </svg>
);
const Flag = () => (
  <svg width="14" height="14" viewBox="0 0 14 14">
    <path d="M1.500 1v12M2 2h4l1 1h4v5H7L6 7H2z" fill="#c3cbd6" stroke="#f3f5f8" strokeWidth="1.200" />
    <circle cx="9" cy="9.500" r="4" fill="#cc3b30" />
    <path d="m7.300 7.800 3.400 3.400M10.700 7.800 7.300 11.200" stroke="#fff" strokeWidth="1.200" />
  </svg>
);
const Network = () => (
  <svg width="14" height="13" viewBox="0 0 14 13">
    <rect x="4" y="3" width="9" height="6.500" fill="#5a6a80" stroke="#eef2f6" strokeWidth="1.200" />
    <path d="M8.500 10v2M5.500 12h6M1 1v3.500h2.500V1M2.200 4.500V12h3" stroke="#eef2f6" strokeWidth="1.100" fill="none" />
  </svg>
);
const Speaker = () => (
  <svg width="14" height="13" viewBox="0 0 14 13">
    <path d="M1 4.500h2.500L7 1.500v10L3.500 8.500H1z" fill="#f1f4f7" />
    <path d="M8.500 4.500c1 1.200 1 2.800 0 4M10.300 3c1.800 2 1.800 5 0 7M12 1.500c2.400 3 2.400 7 0 10" stroke="#eef2f6" fill="none" />
  </svg>
);
const Note = ({ del }: { del?: boolean }) => (
  <svg width="13" height="12" viewBox="0 0 13 12">
    <path d="M1.500 3.500h10.500V11H1.500z" fill="#e0b956" />
    <path d="M1 3.500h11" stroke="#b59a55" strokeWidth=".8" />
    <path d="M1 11.400h11.500V3.500" stroke="#4a3a15" strokeWidth="1.200" fill="none" />
    {del ? (
      <path d="M.5 1 7 7.500M6.500 1 .8 7" stroke="#d9472c" strokeWidth="1.600" />
    ) : (
      <path d="M11.500.8 6 7.500l-2-1.500" stroke="#5d6d3f" strokeWidth="1.500" fill="none" />
    )}
  </svg>
);
const FormatCells = () => (
  <svg width="13" height="12" viewBox="0 0 13 12">
    <rect x=".5" y="3.500" width="9" height="8" fill="#e3e9f3" stroke="#55698f" />
    <path d="M2 6h3M2 8h6M2 10h6" stroke="#5d80bd" />
    <path d="M4 1.500h8.500v3L9.500 7 4.500 4z" fill="#c9a468" stroke="#6e5836" strokeWidth=".8" />
  </svg>
);
const Globe = () => (
  <svg width="13" height="13" viewBox="0 0 13 13">
    <circle cx="5.500" cy="5.500" r="5" fill="#3d8a86" stroke="#2a5f6d" strokeWidth=".7" />
    <path d="M3 2.500c2-1.500 4-.5 4.500 1S5 6 4 7.500 1.500 5 3 2.500z" fill="#7fbf7a" />
    <path d="M4 10.500h8" stroke="#4468ad" strokeWidth="2.400" strokeLinecap="round" />
    <path d="M5 10.500h2M9.500 10.500h2" stroke="#dde5f2" strokeWidth=".9" />
  </svg>
);

/* ---------- data ---------- */
const RED = "#9c2225";
const BLUE = "#5a86c6";
const ORANGE = "#d1792f";
const GREEN = "#249a5c";
const PINK = "#ebbabc";
const GRAY = "#808080";
const BLACK = "#1d1d1d";

const grades: number[][] = [
  [4, 7, 6, 8], [10, 1, 2, 3], [8, 2, 9, 10], [10, 9, 7, 10], [7, 9, 6, 5],
  [2, 4, 6, 8], [4, 7, 4, 9], [1, 7, 4, 8], [2, 7, 4, 9], [8, 9, 5, 6],
];
const totals = [25, 16, 29, 36, 27, 20, 24, 20, 22, 28];
const means = ["6,25", "4", "7,25", "9", "6,75", "5", "6", "5", "5,5", "7"];
const results = ["REC", "RP", "AP", "AP", "AP", "REC", "REC", "REC", "REC", "AP"];
const heads = ["NOME", "NOTA 1", "NOTA 2", "NOTA 3", "NOTA 4", "TOTAL DE PONTOS", "MÉDIA DO ALUNO", "SITUAÇÃO"];

const inkFor = (v: number) => (v < 6 ? RED : v < 6.5 ? ORANGE : BLUE);
const inkForResult: Record<string, string> = { REC: ORANGE, RP: RED, AP: BLUE };

const blanks = (n: number, key: string, hard?: (i: number) => boolean) =>
  Array.from({ length: n }, (_, i) => (
    <Cell key={key + i} $line={hard && hard(i) ? BLACK : undefined} $edge="#cbcccd" />
  ));

const SheetRows = () => (
  <>
    <RowHead>1</RowHead>
    <Cell $span={8} $fill={GRAY} $line={BLACK} $bold $size={14.8} $ls={-0.35} $pt={0}>BOLETIM ESCOLAR</Cell>
    {blanks(9, "r1")}
    <RowHead>2</RowHead>
    {heads.map((h) => (
      <Cell key={h} $fill={GRAY} $line={BLACK} $bold $size={12.4} $ls={-0.42} $pt={1}>{h}</Cell>
    ))}
    {blanks(9, "r2")}
    {grades.map((row, r) => (
      <React.Fragment key={r}>
        <RowHead $sel={r === 0}>{r + 3}</RowHead>
        <Cell $line={BLACK} $bold $left $size={12.6} $ls={-0.45}>{`ALUNO ${r + 1}`}</Cell>
        {row.map((v, i) => (
          <Cell key={i} $line={BLACK} $ink={inkFor(v)}>{v}</Cell>
        ))}
        <Cell $line={BLACK} $fill={totals[r] <= 25 ? PINK : undefined} $ink={totals[r] <= 25 ? RED : GREEN}>{totals[r]}</Cell>
        <Cell $line={BLACK} $ink={inkFor(parseFloat(means[r].replace(",", ".")))}>{means[r]}</Cell>
        {r === 0 ? (
          <ActiveCell $line={BLACK} $ink={ORANGE}>{results[r]}</ActiveCell>
        ) : (
          <ResultCell $line={BLACK} $fill={r === 1 ? PINK : undefined} $bold={r === 1} $ink={inkForResult[results[r]]}>{results[r]}</ResultCell>
        )}
        {blanks(9, "g" + r)}
      </React.Fragment>
    ))}
    {Array.from({ length: 16 }, (_, i) => i + 13).map((n) => {
      const label = n === 14 ? "MAIOR MÉDIA" : n === 16 ? "MENOR MÉDIA" : "";
      return (
        <React.Fragment key={n}>
          <RowHead>{n}</RowHead>
          {label ? (
            <>
              <Cell $fill={GRAY} $line={BLACK} $bold $size={12.6} $ls={-0.4}>{label}</Cell>
              <Cell $line={BLACK} $ink="#222">{n === 14 ? 9 : 4}</Cell>
              {blanks(15, "m" + n)}
            </>
          ) : (
            blanks(17, "m" + n, (c) => (n === 13 || n === 15) && c < 2)
          )}
        </React.Fragment>
      );
    })}
  </>
);

const Key = ({ t }: { t: string }) => {
  const [a, k, b] = t.split("_");
  return <span>{a}{k !== undefined && <u>{k}</u>}{b}</span>;
};

export default function App() {
  return (
    <>
      <Global />
      <Screen>
        <TitleBar>
          <QuickAccess>
            <ExcelMark s={13} />
            <Slot $w={7}><Divider $h={11} /></Slot>
            <Slot $w={16}><Save /></Slot>
            <Slot $w={18}><Undo c="#4470c0" /></Slot>
            <Slot $w={7}><Caret /></Slot>
            <Slot $w={20}><Undo c="#b0b3ba" flip /></Slot>
            <Slot $w={5}><Caret $c="#9a9da4" /></Slot>
            <Slot $w={9}><Divider $h={11} /></Slot>
            <svg width="6" height="7"><path d="M0 .5h6" stroke="#222" /><path d="M.5 3h5L3 6z" fill="#222" /></svg>
          </QuickAccess>
          <Title>Bruno Gomes -  - Microsoft Excel</Title>
          <WindowButtons $w={28}>
            <WinGlyph kind="min" /><WinGlyph kind="max" /><WinGlyph kind="close" />
          </WindowButtons>
        </TitleBar>

        <TabRow>
          <FileTab>Arquivo</FileTab>
          <RibbonTab $w={75} $active>Página Inicial</RibbonTab>
          <RibbonTab $w={50}>Inserir</RibbonTab>
          <RibbonTab $w={90}>Layout da Página</RibbonTab>
          <RibbonTab $w={64}>Fórmulas</RibbonTab>
          <RibbonTab $w={45}>Dados</RibbonTab>
          <RibbonTab $w={57}>Revisão</RibbonTab>
          <RibbonTab $w={52}>Exibição</RibbonTab>
          <RibbonTab $w={88}>Desenvolvedor</RibbonTab>
          <TabTools>
            <Slot $w={16}><WinGlyph kind="up" /></Slot>
            <Slot $w={18}><Help /></Slot>
            <Slot $w={18}><WinGlyph kind="min" /></Slot>
            <Slot $w={17}><WinGlyph kind="max" /></Slot>
            <Slot $w={18}><WinGlyph kind="close" /></Slot>
          </TabTools>
        </TabRow>

        <Ribbon>
          <Group $w={148}>
            <GroupBody>
              <BigButton $w={39}><Clipboard /><span>Colar</span><CaretLine><Caret /></CaretLine></BigButton>
              <SmallStack>
                <SmallButton $icon={15}><Scissors />Recortar</SmallButton>
                <SmallButton $icon={15}><Copy />Copiar<Caret /></SmallButton>
                <SmallButton $icon={15}><Brush />Pincel de Formatação</SmallButton>
              </SmallStack>
            </GroupBody>
            <GroupLabel $r={16}>Área de Transferência</GroupLabel>
            <Launcher />
          </Group>

          <Group $w={167}>
            <GroupBody>
              <Stack $pl={4}>
                <ToolRow $h={34}>
                  <Combo $w={89}>Calibri<Caret /></Combo>
                  <Combo $w={34}>11<Caret /></Combo>
                  <Slot $w={22}><FontStep grow /></Slot>
                  <Slot $w={14}><FontStep /></Slot>
                </ToolRow>
                <ToolRow $h={12}>
                  <Slot $w={19}><Glyph>N</Glyph></Slot>
                  <Slot $w={18}><Glyph $italic>I</Glyph></Slot>
                  <Slot $w={17}><Glyph $u>S</Glyph></Slot>
                  <Slot $w={8}><Caret /></Slot>
                  <Slot $w={10}><Divider /></Slot>
                  <Slot $w={18}><Borders /></Slot>
                  <Slot $w={8}><Caret /></Slot>
                  <Slot $w={9}><Divider /></Slot>
                  <Slot $w={18}><Fill /></Slot>
                  <Slot $w={8}><Caret /></Slot>
                  <Slot $w={18}><FontColor /></Slot>
                  <Slot $w={5}><Caret /></Slot>
                </ToolRow>
              </Stack>
            </GroupBody>
            <GroupLabel $r={16}>Fonte</GroupLabel>
            <Launcher />
          </Group>

          <Group $w={267}>
            <GroupBody>
              <Stack $pl={4}>
                <ToolRow $h={34}>
                  <Slot $w={19}><Lines rows={[[0, 0, 11], [2, 3, 8], [0, 6, 11]]} /></Slot>
                  <Slot $w={18}><Lines rows={[[0, 3, 11], [2, 6, 8], [0, 9, 11]]} /></Slot>
                  <Slot $w={19}><Pressed><Lines rows={[[1, 5, 10], [2, 8, 8], [1, 11, 10]]} h={14} /></Pressed></Slot>
                  <Slot $w={7}><Divider /></Slot>
                  <Slot $w={19}><Orientation /></Slot>
                  <Slot $w={5}><Caret /></Slot>
                </ToolRow>
                <ToolRow $h={12}>
                  <Slot $w={19}><Lines rows={[[0, 1, 11], [0, 4, 8], [0, 7, 11], [0, 10, 8]]} /></Slot>
                  <Slot $w={18}><Pressed><Lines rows={[[0, 1, 12], [2, 4, 8], [0, 7, 12], [2, 10, 8]]} /></Pressed></Slot>
                  <Slot $w={19}><Lines rows={[[0, 1, 11], [3, 4, 8], [0, 7, 11], [3, 10, 8]]} /></Slot>
                  <Slot $w={7}><Divider /></Slot>
                  <Slot $w={18}><Indent /></Slot>
                  <Slot $w={18}><Indent out /></Slot>
                </ToolRow>
              </Stack>
              <Slot $w={7}><Divider $h={46} /></Slot>
              <Stack>
                <ToolRow $h={34}><Slot $w={17}><Wrap /></Slot>Quebrar Texto Automaticamente</ToolRow>
                <ToolRow $h={12}><Slot $w={17}><Merge /></Slot>Mesclar e Centralizar<Slot $w={10}><Caret /></Slot></ToolRow>
              </Stack>
            </GroupBody>
            <GroupLabel $r={16}>Alinhamento</GroupLabel>
            <Launcher />
          </Group>

          <Group $w={114}>
            <GroupBody>
              <Stack $pl={4}>
                <ToolRow $h={34}><Combo $w={106}>Geral<Caret /></Combo></ToolRow>
                <ToolRow $h={12}>
                  <Slot $w={19}><Currency /></Slot>
                  <Slot $w={5}><Caret /></Slot>
                  <Slot $w={24}><Percent>%</Percent></Slot>
                  <Slot $w={14}><Thousands>000</Thousands></Slot>
                  <Slot $w={12}><Divider /></Slot>
                  <Slot $w={12}><Decimal more /></Slot>
                  <Slot $w={24}><Decimal /></Slot>
                </ToolRow>
              </Stack>
            </GroupBody>
            <GroupLabel $r={16}>Número</GroupLabel>
            <Launcher />
          </Group>

          <Group $w={172}>
            <GroupBody>
              <BigButton $w={66}><GridIcon kind="cond" /><span>Formatação</span><span>Condicional<Caret /></span></BigButton>
              <BigButton $w={56}><GridIcon kind="table" /><span>Formatar</span><span>como Tabela<Caret /></span></BigButton>
              <BigButton $w={49}><GridIcon kind="style" /><span>Estilos de</span><span>Célula<Caret /></span></BigButton>
            </GroupBody>
            <GroupLabel>Estilo</GroupLabel>
          </Group>

          <Group $w={115}>
            <GroupBody>
              <BigButton $w={40}><CellsIcon kind="in" /><span>Inserir</span><CaretLine><Caret /></CaretLine></BigButton>
              <BigButton $w={28}><CellsIcon kind="out" /><span>Excluir</span><CaretLine><Caret /></CaretLine></BigButton>
              <BigButton $w={46}><CellsIcon kind="fmt" /><span>Formatar</span><CaretLine><Caret /></CaretLine></BigButton>
            </GroupBody>
            <GroupLabel>Células</GroupLabel>
          </Group>

          <Group $w={176}>
            <GroupBody>
              <SmallStack $w={72} $pl={7}>
                <SmallButton $icon={15}><Sigma>Σ</Sigma>AutoSoma<Caret /></SmallButton>
                <SmallButton $icon={15}><FillDown />Preencher<Caret /></SmallButton>
                <SmallButton $icon={15}><Eraser />Limpar<Caret /></SmallButton>
              </SmallStack>
              <BigButton $w={52}><SortFilter /><span>Classificar</span><span>e Filtrar<Caret /></span></BigButton>
              <BigButton $w={46}><Binoculars /><span>Localizar e</span><span>Selecionar<Caret /></span></BigButton>
            </GroupBody>
            <GroupLabel>Edição</GroupLabel>
          </Group>
        </Ribbon>

        <FormulaBar>
          <NameBox><span>H3</span><Caret $c="#222" /></NameBox>
          <FxArea>
            <svg width="16" height="18" viewBox="0 0 16 18">
              <path d="M16 0H9a9 9 0 0 0 0 18h7z" fill="#c9ced8" />
              <path d="M9 .5a8.500 8.500 0 0 0 0 17" fill="none" stroke="#9da2ab" />
              <path d="M4 9a4.500 4.500 0 0 1 7-2.500" stroke="#b3b8c1" fill="none" />
              <path d="M5 8h5" stroke="#a4a9b3" strokeWidth="1.500" />
            </svg>
            <FxLabel>fx</FxLabel>
          </FxArea>
          <FormulaInput>=SE(G3&gt;=6,5;"AP";SE(G3&gt;=5;"REC";"RP"))</FormulaInput>
          <ExpandButton>
            <svg width="7" height="5"><path d="M1 1l2.500 2.500L6 1" stroke="#33363c" strokeWidth="1.500" fill="none" /></svg>
          </ExpandButton>
        </FormulaBar>

        <Work>
          <Sheet>
            <Corner><svg width="12" height="12"><path d="M12 0v12H0z" fill="#b2bac6" /></svg></Corner>
            {LETTERS.map((l) => (
              <ColHead key={l} $sel={l === "H"}>{l}</ColHead>
            ))}
            <SheetRows />
          </Sheet>
          <VScroll>
            <VSplit />
            <Arrow $dir="up" />
            <VThumb><Grip /><Grip /><Grip /></VThumb>
            <Arrow $dir="down" />
          </VScroll>
        </Work>

        <SheetTabs>
          <NavArrows><NavArrow end /><NavArrow /><NavArrow flip /><NavArrow end flip /></NavArrows>
          <SheetTab $w={49} $active $pl={8}>Boletim</SheetTab>
          <Slash />
          <SheetTab $w={46}>Compras</SheetTab>
          <Slash />
          <SheetTab $w={60} $pl={2}>Pagamento</SheetTab>
          <Slash />
          <SheetTab $w={140} $pl={5}>Endereço Absoluto e Gráfico</SheetTab>
          <Slash />
          <Slot $w={17}><NewSheet /></Slot>
          <Slash />
          <HScroll>
            <HSplit><Grip $v /></HSplit>
            <Slot $w={12}><Arrow $dir="left" /></Slot>
            <HThumb><Grip $v /><Grip $v /><Grip $v /></HThumb>
            <Arrow $dir="right" />
            <Slot $w={5} />
            <HSplit><Grip $v /></HSplit>
          </HScroll>
        </SheetTabs>

        <StatusBar>
          <Slot $w={29}>Pronto</Slot>
          <Slot $w={14}><Divider $h={13} /></Slot>
          <MacroIcon />
          <Slot $w={16}><Divider $h={13} /></Slot>
          <Right>
            <Divider $h={13} />
            <Slot $w={4} />
            <ViewPressed><ViewIcon kind={0} /></ViewPressed>
            <Slot $w={13}><ViewIcon kind={1} /></Slot>
            <Slot $w={15}><ViewIcon kind={2} /></Slot>
            <Slot $w={38}>115%</Slot>
            <RoundButton />
            <ZoomTrack><svg width="8" height="11"><path d="M.5.500h7v6.500L4 10.500.5 7z" fill="#e3e4e7" stroke="#5f646d" /></svg></ZoomTrack>
            <RoundButton plus />
          </Right>
        </StatusBar>

        <TaskBar>
          <TaskSlot $w={43}><Start /></TaskSlot>
          <TaskSlot $w={56}><Firefox /></TaskSlot>
          <TaskSlot $w={47}><Folder /></TaskSlot>
          <TaskSlot $w={44} $active><ExcelMark s={24} /></TaskSlot>
          <TaskSlot $w={52}><Chrome /></TaskSlot>
          <Tray>
            <Lang>PT</Lang>
            <Slot $w={24}><Keyboard /></Slot>
            <Slot $w={14}><Arrow $dir="up" $c="#eef2f6" /></Slot>
            <Slot $w={25}><Flag /></Slot>
            <Slot $w={16}><Network /></Slot>
            <Slot $w={22}><Speaker /></Slot>
            <Clock>02:00<br />28/05/2016</Clock>
            <ShowDesktop />
          </Tray>
        </TaskBar>

        <Menu>
          <MenuItem><Scissors /><Key t="R_e_cortar" /></MenuItem>
          <MenuItem><Copy /><Key t="Copi_a_r" /></MenuItem>
          <MenuItem $head><PasteSmall /><span>Opções de Colagem:</span></MenuItem>
          <PasteOption>A</PasteOption>
          <MenuItem><i /><Key t="_C_olar Especial..." /></MenuItem>
          <MenuRule />
          <MenuItem><i /><Key t="_I_nserir..." /></MenuItem>
          <MenuItem><i /><Key t="_E_xcluir..." /></MenuItem>
          <MenuItem $hot><i /><Key t="_L_impar conteúdo" /></MenuItem>
          <MenuRule />
          <MenuItem><i /><Key t="Fi_l_trar" /><Arrow $dir="right" /></MenuItem>
          <MenuItem><i /><Key t="_C_lassificar" /><Arrow $dir="right" /></MenuItem>
          <MenuRule />
          <MenuItem><Note /><Key t="E_d_itar Comentário" /></MenuItem>
          <MenuItem><Note del /><Key t="E_x_cluir comentário" /></MenuItem>
          <MenuItem><i /><Key t="M_o_strar/Ocultar Comentários" /></MenuItem>
          <MenuRule />
          <MenuItem><FormatCells /><Key t="_F_ormatar células..." /></MenuItem>
          <MenuItem><i /><Key t="Escolher na Lista S_u_spensa..." /></MenuItem>
          <MenuItem><i /><Key t="Definir N_o_me..." /></MenuItem>
          <MenuItem><Globe /><Key t="Hiperlin_k_..." /></MenuItem>
        </Menu>
        <Pointer width="10" height="16" viewBox="0 0 10 16">
          <path d="M.7.800v11.500l2.700-2.500 2 4.700 2-.9-2-4.500h3.600z" fill="#f2f2f2" stroke="#333" strokeWidth=".9" />
        </Pointer>
      </Screen>
    </>
  );
}
